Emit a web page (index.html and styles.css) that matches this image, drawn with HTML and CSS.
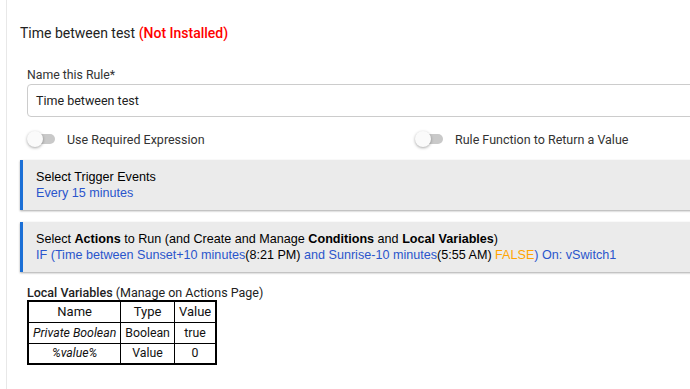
FILE: index.html
```html
<!DOCTYPE html>
<html lang="en">
<head>
    <meta charset="UTF-8">
    <meta name="viewport" content="width=device-width, initial-scale=1.0">
    <title>Time between test</title>
    <link rel="stylesheet" href="styles.css">
</head>
<body>
    <div class="page">
        <h1 class="app-title">Time between test <span class="not-installed">(Not Installed)</span></h1>

        <div class="field">
            <label class="field-label">Name this Rule*</label>
            <div class="text-input">Time between test</div>
        </div>

        <div class="toggle-row">
            <div class="toggle-item">
                <div class="switch"><div class="switch-knob"></div></div>
                <span>Use Required Expression</span>
            </div>
            <div class="toggle-item">
                <div class="switch"><div class="switch-knob"></div></div>
                <span>Rule Function to Return a Value</span>
            </div>
        </div>

        <div class="section-box">
            <div>Select Trigger Events</div>
            <div class="blue">Every 15 minutes</div>
        </div>

        <div class="section-box">
            <div>Select <b>Actions</b> to Run (and Create and Manage <b>Conditions</b> and <b>Local Variables</b>)</div>
            <div><span class="blue">IF (Time between Sunset+10 minutes</span>(8:21 PM)<span class="blue"> and Sunrise-10 minutes</span>(5:55 AM) <span class="orange">FALSE</span><span class="blue">) On: vSwitch1</span></div>
        </div>

        <div class="vars">
            <div class="vars-title"><b>Local Variables</b> (Manage on Actions Page)</div>
            <table class="vars-table">
                <tr><th>Name</th><th>Type</th><th>Value</th></tr>
                <tr><td><i>Private Boolean</i></td><td>Boolean</td><td>true</td></tr>
                <tr><td><i>%value%</i></td><td>Value</td><td>0</td></tr>
            </table>
        </div>
    </div>
</body>
</html>
```

FILE: styles.css
```css
* {
    box-sizing: border-box;
}
body {
    margin: 0;
    background: #fff;
    font-family: Roboto, "Liberation Sans", sans-serif;
    color: #222;
}
.page {
    margin-left: 6px;
    border-left: 1px solid #e8e8e8;
    min-height: 100vh;
    padding: 24px 0 0 13px;
    overflow: hidden;
}
.app-title {
    margin: 0;
    font-size: 14px;
    font-weight: 400;
    line-height: 18px;
    color: #222;
}
.not-installed {
    color: #f00;
    font-weight: 500;
}
.field {
    margin: 25px 0 0 7px;
}
.field-label {
    display: block;
    font-size: 12.3px;
    line-height: 17px;
    color: #333;
}
.text-input {
    width: 700px;
    height: 33px;
    border: 1px solid #ccc;
    border-radius: 4px;
    padding: 0 8px;
    font-size: 12.5px;
    line-height: 31px;
    color: #222;
}
/* switches */
.toggle-row {
    display: grid;
    grid-template-columns: 388px 1fr;
    margin: 12px 0 0 7px;
    height: 20px;
}
.toggle-item {
    display: flex;
    align-items: center;
    gap: 12px;
    font-size: 12.5px;
    color: #333;
}
.switch {
    position: relative;
    width: 25px;
    height: 10px;
    margin-left: 3px;
    border-radius: 5px;
    background: #c9c9c9;
}
.switch-knob {
    position: absolute;
    left: -3px;
    top: -3px;
    width: 16px;
    height: 16px;
    border-radius: 50%;
    background: #fafafa;
    box-shadow: 0 1px 3px rgba(0,0,0,.35);
}
/* sections */
.section-box {
    width: 700px;
    margin-top: 11px;
    padding: 9px 13px;
    background: #ebebeb;
    border-left: 3px solid #1b6fd6;
    box-shadow: 0 1px 2px rgba(0,0,0,.35);
    font-family: "Liberation Sans", Arial, sans-serif;
    font-size: 12.6px;
    line-height: 16px;
    color: #000;
}
.section-box + .section-box {
    margin-top: 12px;
}
.blue {
    color: #2a55cc;
}
.orange {
    color: #ffa500;
}
/* local variables */
.vars {
    margin: 13px 0 0 7px;
}
.vars-title {
    font-size: 12.5px;
    line-height: 15px;
    color: #222;
}
.vars-title b {
    font-weight: 500;
}
.vars-table {
    border-collapse: collapse;
    border: 2px solid #000;
    font-size: 12.3px;
    color: #111;
}
.vars-table th,
.vars-table td {
    border: 1px solid #000;
    padding: 0 4px;
    height: 21px;
    text-align: center;
    font-weight: 400;
}
.vars-table th {
    font-size: 13px;
}
```
